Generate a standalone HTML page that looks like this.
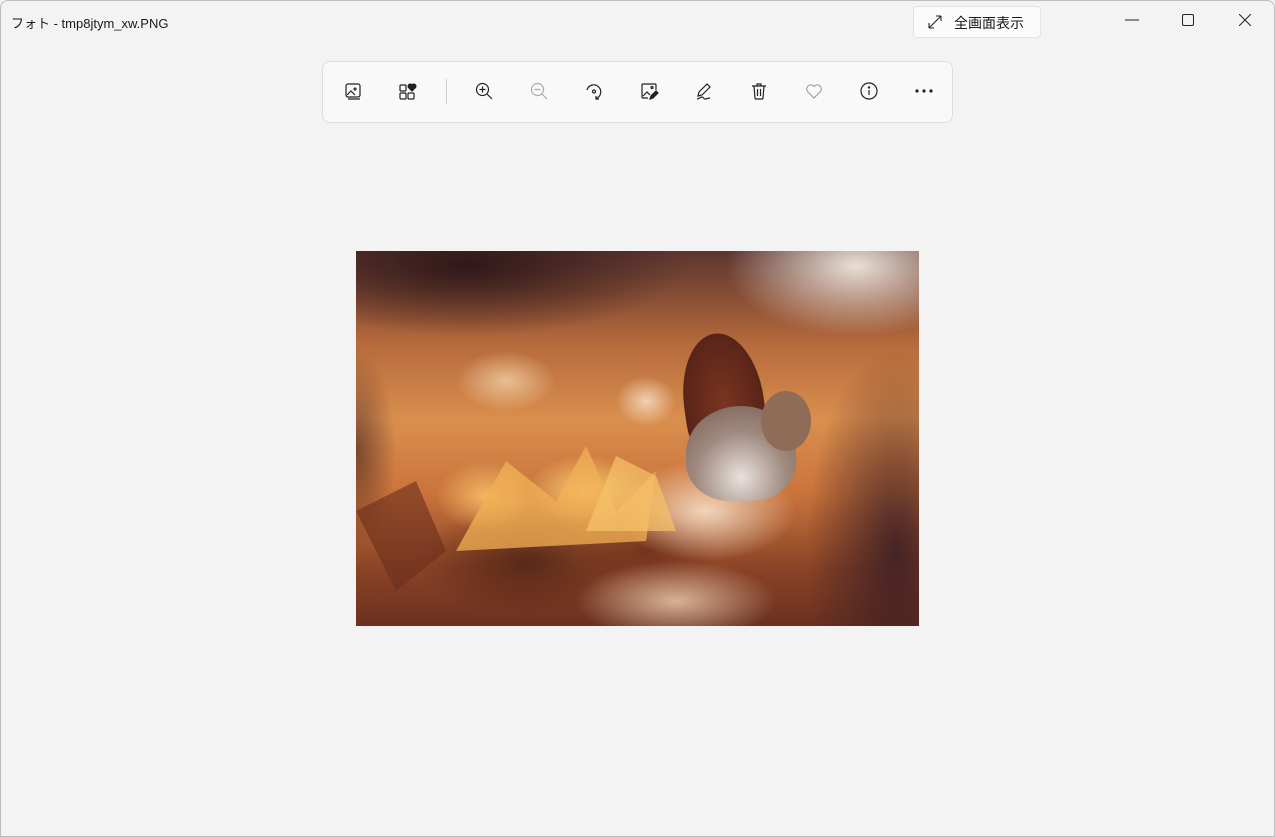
<!DOCTYPE html>
<html><head><meta charset="utf-8"><style>
*{margin:0;padding:0;box-sizing:border-box}
html,body{width:1275px;height:837px;overflow:hidden;background:#f3f3f3;font-family:"Liberation Sans","Noto Sans CJK JP",sans-serif;position:relative}
.frame{position:absolute;left:0;top:0;width:1275px;height:837px;border:1px solid #bdbdbd;border-radius:8px 8px 0 0;pointer-events:none}
.title{position:absolute;left:11px;top:13px;font-size:13px;color:#1a1a1a}
.fs{position:absolute;left:913px;top:6px;width:128px;height:32px;background:#fbfbfb;border:1px solid #e3e3e3;border-radius:4px;font-size:14px;color:#1a1a1a}
.fs span{position:absolute;left:40px;top:6px}
.tb{position:absolute;left:322px;top:61px;width:631px;height:62px;background:#f9f9f9;border:1px solid #dcdcdc;border-radius:8px}
.ic{position:absolute;top:81px;width:20px;height:20px}
.sep{position:absolute;left:446px;top:79px;width:1px;height:25px;background:#d0d0d0}
.photo{position:absolute;left:356px;top:251px;width:563px;height:375px;overflow:hidden;
background:
radial-gradient(ellipse 130px 70px at 500px 15px,rgba(240,232,222,.95),transparent),
radial-gradient(ellipse 30px 25px at 290px 150px,rgba(255,240,220,.7),transparent),
radial-gradient(ellipse 50px 30px at 150px 130px,rgba(255,235,200,.6),transparent),
radial-gradient(ellipse 60px 35px at 230px 240px,rgba(255,215,120,.9),transparent),
radial-gradient(ellipse 50px 35px at 130px 245px,rgba(255,200,110,.8),transparent),
radial-gradient(ellipse 90px 50px at 350px 260px,rgba(255,240,220,.8),transparent),
radial-gradient(ellipse 100px 40px at 320px 350px,rgba(255,230,200,.7),transparent),
radial-gradient(ellipse 110px 55px at 170px 310px,rgba(70,30,20,.75),transparent),
radial-gradient(ellipse 70px 40px at 290px 300px,rgba(90,35,20,.6),transparent),
radial-gradient(ellipse 90px 200px at 540px 300px,rgba(55,28,35,.85),transparent),
radial-gradient(ellipse 220px 70px at 110px 15px,rgba(45,22,24,.95),transparent),
radial-gradient(ellipse 40px 100px at 0px 200px,rgba(60,30,30,.6),transparent),
linear-gradient(180deg,#5b3530 0%,#b76a3c 25%,#da8f4e 45%,#c9733b 65%,#8a4326 85%,#6a3020 100%)}
.sq{position:absolute}
</style></head><body>
<div class="title">フォト - tmp8jtym_xw.PNG</div>
<div class="fs"><svg style="position:absolute;left:14px;top:8px" width="14" height="14" viewBox="0 0 14 14" fill="none" stroke="#222" stroke-width="1.1"><path d="M1 13L13 1M1 13V8M1 13H6M13 1H8M13 1V6"/></svg><span>全画面表示</span></div>
<svg style="position:absolute;left:1125px;top:19px" width="14" height="2"><path d="M0 1H14" stroke="#222"/></svg>
<svg style="position:absolute;left:1182px;top:14px" width="12" height="12"><rect x=".5" y=".5" width="11" height="11" rx="1.5" fill="none" stroke="#222"/></svg>
<svg style="position:absolute;left:1239px;top:14px" width="12" height="12"><path d="M0 0L12 12M12 0L0 12" stroke="#222"/></svg>
<div class="tb"></div>
<div class="sep"></div>
<svg class="ic" style="left:343px" viewBox="0 0 20 20" fill="none" stroke="#222" stroke-width="1.2"><rect x="3" y="3" width="14" height="13" rx="2"/><path d="M5 18h12M4 14l4-4 4 4M12 7a1 1 0 1 0 .1 0"/></svg>
<svg class="ic" style="left:398px" viewBox="0 0 20 20" fill="none" stroke="#222" stroke-width="1.2"><rect x="2" y="4" width="6" height="6" rx="1"/><rect x="2" y="12" width="6" height="6" rx="1"/><rect x="10" y="12" width="6" height="6" rx="1"/><path d="M14 10l-3.5-3.5a2 2 0 0 1 3.5-2.5a2 2 0 0 1 3.5 2.5z" fill="#222"/></svg>
<svg class="ic" style="left:474px" viewBox="0 0 20 20" fill="none" stroke="#222" stroke-width="1.2"><circle cx="8.5" cy="8.5" r="6"/><path d="M13 13l5 5M8.5 5.5v6M5.5 8.5h6"/></svg>
<svg class="ic" style="left:529px" viewBox="0 0 20 20" fill="none" stroke="#aaa" stroke-width="1.2"><circle cx="8.5" cy="8.5" r="6"/><path d="M13 13l5 5M5.5 8.5h6"/></svg>
<svg class="ic" style="left:584px" viewBox="0 0 20 20" fill="none" stroke="#222" stroke-width="1.2"><path d="M3 9A7 7 0 1 1 12 17.5M12 15v3h3"/><circle cx="10" cy="10.5" r="1.5"/></svg>
<svg class="ic" style="left:639px" viewBox="0 0 20 20" fill="none" stroke="#222" stroke-width="1.2"><path d="M9 17H4a1 1 0 0 1-1-1V4a1 1 0 0 1 1-1h12a1 1 0 0 1 1 1v5M4 15l4-4 3 3"/><circle cx="13" cy="6.5" r="1"/><path d="M11 18l1-3 5-5 2 2-5 5z" fill="#222"/></svg>
<svg class="ic" style="left:694px" viewBox="0 0 20 20" fill="none" stroke="#222" stroke-width="1.2"><path d="M4 15l1-4 8-8 3 3-8 8zM3 18c2 0 3-2 5-2s1 2 3 2 3-1 5-1"/></svg>
<svg class="ic" style="left:749px" viewBox="0 0 20 20" fill="none" stroke="#222" stroke-width="1.2"><path d="M3 5h14M8 5V3h4v2M5 5l1 12a1 1 0 0 0 1 1h6a1 1 0 0 0 1-1l1-12M8.5 8v7M11.5 8v7"/></svg>
<svg class="ic" style="left:804px" viewBox="0 0 20 20" fill="none" stroke="#999" stroke-width="1.1"><path d="M10 17L3.5 10.5a4 4 0 0 1 6.5-5a4 4 0 0 1 6.5 5z"/></svg>
<svg class="ic" style="left:859px" viewBox="0 0 20 20" fill="none" stroke="#222" stroke-width="1.2"><circle cx="10" cy="10" r="8"/><path d="M10 9v5"/><circle cx="10" cy="6.5" r=".6" fill="#222"/></svg>
<svg class="ic" style="left:914px" viewBox="0 0 20 20" fill="#222"><circle cx="3" cy="10" r="1.6"/><circle cx="10" cy="10" r="1.6"/><circle cx="17" cy="10" r="1.6"/></svg>
<div class="photo">
<svg style="position:absolute;left:0;top:0" width="563" height="375">
<path d="M100 300L150 210L200 250L230 195L260 260L300 220L290 290Z" fill="#f2b055" opacity=".75"/>
<path d="M230 280L260 205L300 225L320 280Z" fill="#f6c36a" opacity=".7"/>
<path d="M0 260L60 230L90 300L40 340Z" fill="#6a2e1c" opacity=".6"/>
</svg>
<div class="sq" style="left:328px;top:82px;width:80px;height:140px;border-radius:50% 50% 30% 40%;background:radial-gradient(#7a3420,#4a1e16);transform:rotate(-8deg)"></div>
<div class="sq" style="left:330px;top:155px;width:110px;height:95px;border-radius:50% 50% 40% 40%;background:radial-gradient(circle at 50% 75%,#e8e2de 0%,#a08a80 50%,#765b4c 100%)"></div>
<div class="sq" style="left:405px;top:140px;width:50px;height:60px;border-radius:50%;background:#8e6c58"></div>
</div>
<div class="frame"></div>
</body></html>
